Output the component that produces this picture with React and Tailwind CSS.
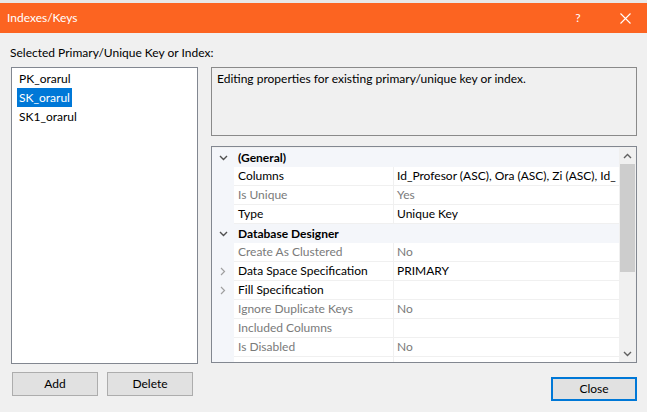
import React from "react";

const rows = [
  { type: "cat", name: "(General)" },
  { name: "Columns", value: "Id_Profesor (ASC), Ora (ASC), Zi (ASC), Id_" },
  { name: "Is Unique", value: "Yes", dim: true },
  { name: "Type", value: "Unique Key" },
  { type: "cat", name: "Database Designer" },
  { name: "Create As Clustered", value: "No", dim: true },
  { name: "Data Space Specification", value: "PRIMARY", expand: true },
  { name: "Fill Specification", value: "", expand: true },
  { name: "Ignore Duplicate Keys", value: "No", dim: true },
  { name: "Included Columns", value: "", dim: true },
  { name: "Is Disabled", value: "No", dim: true },
  { name: "", value: "" },
];

function ChevronDown({ className }) {
  return (
    <svg width="9" height="6" viewBox="0 0 9 6" className={className}>
      <path d="M1 1l3.5 3.5L8 1" fill="none" stroke="currentColor" strokeWidth="1.4" />
    </svg>
  );
}

function ChevronRight({ className }) {
  return (
    <svg width="6" height="9" viewBox="0 0 6 9" className={className}>
      <path d="M1 1l3.5 3.5L1 8" fill="none" stroke="currentColor" strokeWidth="1.2" />
    </svg>
  );
}

function GridRow({ row }) {
  if (row.type === "cat") {
    return (
      <div className="flex h-[19px] shrink-0 bg-[#f4f6fa]">
        <div className="w-[22px] shrink-0 flex items-center justify-center text-[#505050]">
          <ChevronDown />
        </div>
        <div className="flex-1 flex items-center pl-[4px] font-bold text-black">{row.name}</div>
      </div>
    );
  }
  return (
    <div className="flex h-[19px] shrink-0">
      <div className="w-[22px] shrink-0 flex items-center justify-center text-[#a0a0a0] bg-[#f4f6fa]">
        {row.expand && <ChevronRight />}
      </div>
      <div className="flex-1 min-w-0 flex bg-white border-b border-[#f0f0f0]">
        <div
          className={`w-[160px] shrink-0 flex items-center pl-[4px] border-r border-[#f0f0f0] whitespace-nowrap ${
            row.dim ? "text-[#7a7a7a]" : "text-black"
          }`}
        >
          {row.name}
        </div>
        <div
          className={`flex-1 min-w-0 flex items-center pl-[3px] whitespace-nowrap overflow-hidden ${
            row.dim ? "text-[#7a7a7a]" : "text-black"
          }`}
        >
          {row.value}
        </div>
      </div>
    </div>
  );
}

export default function App() {
  return (
    <div
      className="w-[647px] h-[412px] bg-[#f0f0f0] flex flex-col overflow-hidden text-[12px] text-black"
      style={{ fontFamily: "Lato, 'Noto Sans', sans-serif" }}
    >
      {/* Window behind */}
      <div className="h-[3px] bg-[#e8e8e8]" />

      {/* Title bar */}
      <div className="h-[30px] bg-[#fc6421] flex items-center text-white">
        <span className="pl-[7px] flex-1">Indexes/Keys</span>
        <span className="w-[20px] text-center mr-[32px]">?</span>
        <svg width="11" height="11" viewBox="0 0 11 11" className="mr-[16px]">
          <path d="M0.5 0.5l10 10M10.5 0.5l-10 10" stroke="white" strokeWidth="1.1" />
        </svg>
      </div>

      <div className="pl-[10px] pt-[12px] h-[34px] leading-[15px]">Selected Primary/Unique Key or Index:</div>

      <div className="flex pl-[11px] gap-[13px]">
        {/* Left column */}
        <div className="w-[187px] flex flex-col">
          <div className="h-[297px] bg-white border border-[#828790] pt-[1px] pl-[5px]">
            <div className="h-[19px] flex items-center pl-[2px]">PK_orarul</div>
            <div className="h-[19px] flex">
              <span className="bg-[#0078d7] text-white px-[2px] flex items-center">SK_orarul</span>
            </div>
            <div className="h-[19px] flex items-center pl-[2px]">SK1_orarul</div>
          </div>
          <div className="flex gap-[9px] mt-[8px] pl-[1px]">
            <button className="w-[86px] h-[24px] bg-[#e1e1e1] border border-[#adadad]">Add</button>
            <button className="w-[86px] h-[24px] bg-[#e1e1e1] border border-[#adadad]">Delete</button>
          </div>
        </div>

        {/* Right column */}
        <div className="w-[426px] flex flex-col">
          <div className="h-[69px] border border-[#8a8a8a] bg-[#f0f0f0] px-[5px] pt-[3px] leading-[15px]">
            Editing properties for existing primary/unique key or index.
          </div>

          <div className="mt-[10px] h-[217px] border border-[#828790] flex overflow-hidden">
            <div className="flex-1 min-w-0 flex flex-col pt-[1px] overflow-hidden">
              {rows.map((r, i) => (
                <GridRow key={i} row={r} />
              ))}
            </div>
            {/* Scrollbar */}
            <div className="w-[17px] shrink-0 bg-[#f0f0f0] flex flex-col">
              <div className="h-[17px] flex items-center justify-center text-[#606060]">
                <ChevronDown className="rotate-180" />
              </div>
              <div className="h-[108px] mx-[1px] bg-[#cdcdcd]" />
              <div className="flex-1" />
              <div className="h-[17px] flex items-center justify-center text-[#606060]">
                <ChevronDown />
              </div>
            </div>
          </div>

          <div className="flex justify-end mt-[14px]">
            <button className="w-[86px] h-[24px] bg-[#e1e1e1] border-2 border-[#0078d7]">Close</button>
          </div>
        </div>
      </div>
    </div>
  );
}
